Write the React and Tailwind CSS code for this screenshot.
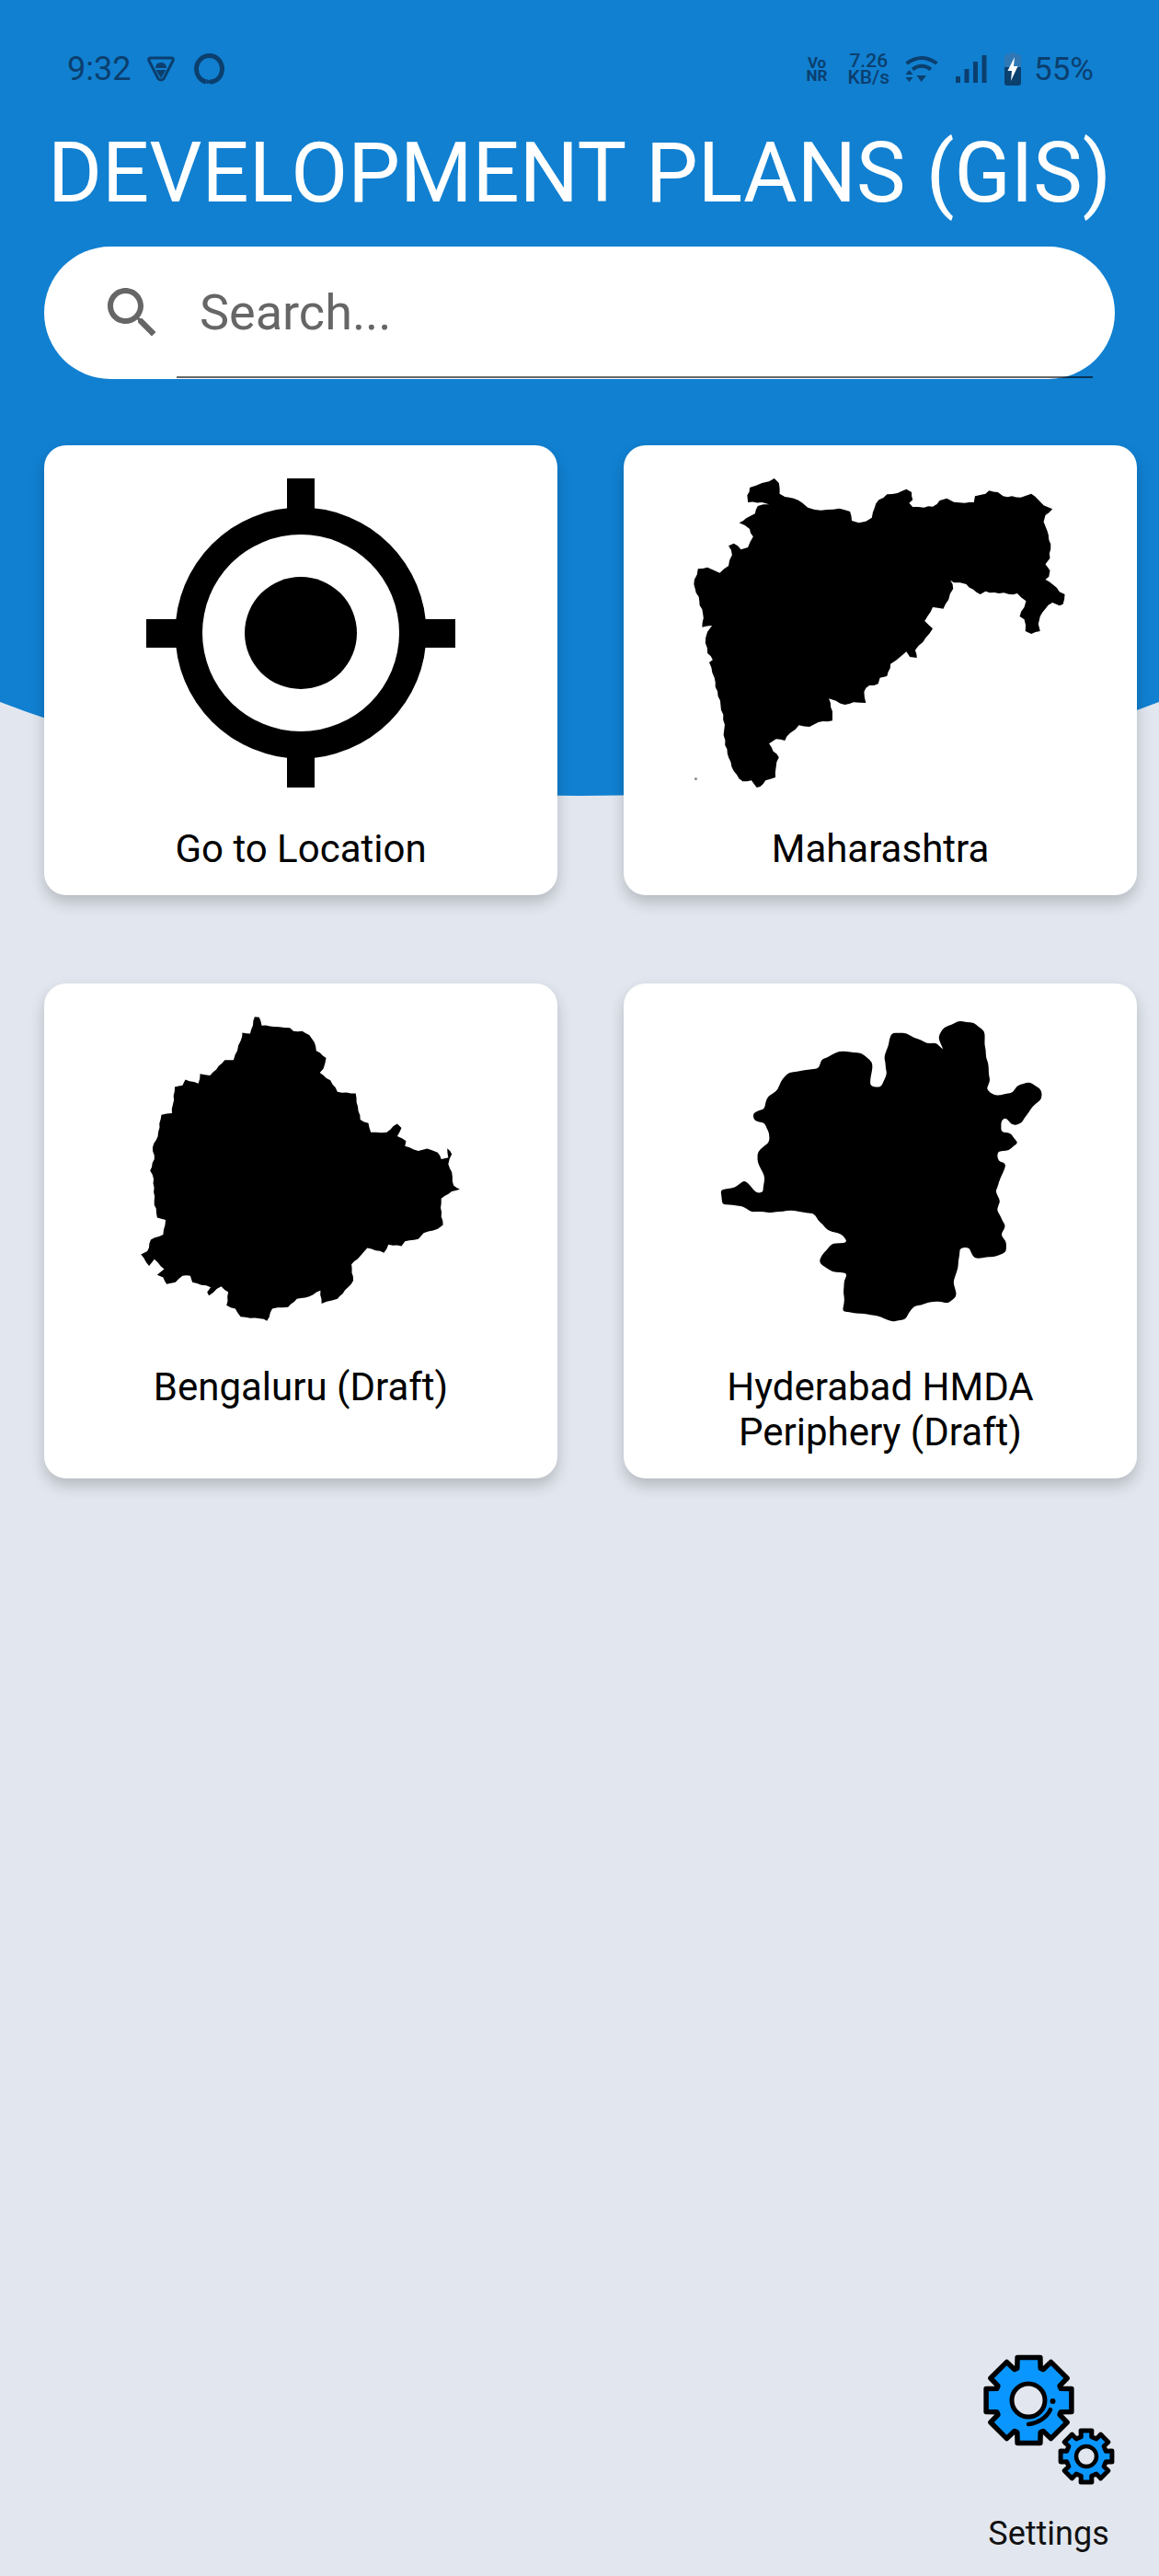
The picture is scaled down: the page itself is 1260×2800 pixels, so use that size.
const cards = [
  { label: "Go to Location", art: <TargetIcon /> },
  { label: "Maharashtra", art: <MaharashtraMap /> },
  { label: "Bengaluru (Draft)", art: <BengaluruMap /> },
  { label: "Hyderabad HMDA Periphery (Draft)", art: <HyderabadMap /> },
];

function gearPath(cx, cy, tipR, rootR, tipHalf, rootHalf) {
  let d = "";
  for (let i = 0; i < 8; i++) {
    const a = i * 45 - 90;
    const pts = [
      [a - rootHalf, rootR],
      [a - tipHalf, tipR],
      [a + tipHalf, tipR],
      [a + rootHalf, rootR],
    ];
    pts.forEach(([deg, r]) => {
      const rad = (deg * Math.PI) / 180;
      const x = (cx + r * Math.cos(rad)).toFixed(1);
      const y = (cy + r * Math.sin(rad)).toFixed(1);
      d += `${d ? "L" : "M"}${x} ${y} `;
    });
  }
  return d + "Z";
}

function toPoints(str) {
  return str.trim().split(/\s+/).map((p) => p.split(",").map(Number));
}

// breaks long edges into small steps so the outline looks like a low-res map image
function roughen(str, step, amp) {
  const pts = toPoints(str);
  const out = [];
  let n = 0;
  pts.forEach((p, i) => {
    const q = pts[(i + 1) % pts.length];
    const dx = q[0] - p[0];
    const dy = q[1] - p[1];
    const len = Math.hypot(dx, dy);
    const parts = Math.max(1, Math.round(len / step));
    for (let k = 0; k < parts; k++) {
      n++;
      const t = k / parts;
      const off = k === 0 ? 0 : ((n * 7) % 5 - 2) * (amp / 2);
      out.push(`${(p[0] + dx * t - (dy / len) * off).toFixed(1)},${(p[1] + dy * t + (dx / len) * off).toFixed(1)}`);
    }
  });
  return out.join(" ");
}

// rounds the corners of a closed outline with quadratic curves through edge midpoints
function smoothPath(str) {
  const pts = toPoints(str);
  const mid = (a, b) => [(a[0] + b[0]) / 2, (a[1] + b[1]) / 2];
  const start = mid(pts[pts.length - 1], pts[0]);
  let d = `M${start[0]} ${start[1]} `;
  pts.forEach((p, i) => {
    const m = mid(p, pts[(i + 1) % pts.length]);
    d += `Q${p[0]} ${p[1]} ${m[0]} ${m[1]} `;
  });
  return d + "Z";
}

function TargetIcon() {
  return (
    <svg viewBox="0 0 336 336" className="w-[336px] h-[336px]">
      <rect x="153" y="0" width="30" height="336" />
      <rect x="0" y="153" width="336" height="31" />
      <circle cx="168" cy="168" r="136.5" />
      <circle cx="168" cy="168" r="107" fill="#fff" />
      <circle cx="168" cy="168" r="61" />
    </svg>
  );
}

const maharashtra = "475,120 488,135 490,170 505,180 530,185 555,200 570,215 590,222 625,222 660,218 690,228 695,258 715,265 735,260 752,248 760,215 772,190 795,172 825,168 850,155 865,165 868,190 858,200 868,213 900,215 925,212 945,192 965,185 985,197 1015,200 1042,198 1045,178 1075,170 1085,160 1110,165 1125,178 1150,178 1175,182 1205,170 1225,190 1240,208 1265,220 1245,240 1240,262 1250,290 1255,320 1260,350 1258,380 1245,400 1258,420 1255,440 1245,450 1265,465 1285,490 1300,498 1295,530 1285,535 1265,525 1245,545 1230,570 1225,595 1230,618 1205,627 1188,618 1185,580 1172,570 1185,540 1190,520 1165,495 1140,497 1100,492 1075,488 1060,498 1040,482 1020,465 985,460 975,452 983,480 970,515 955,545 925,540 910,570 902,585 925,610 905,640 885,665 875,680 880,705 860,702 850,685 835,700 805,725 795,765 775,770 770,790 745,795 730,815 735,852 700,850 675,858 650,845 630,838 640,880 640,910 600,915 575,930 545,925 520,950 505,975 480,970 460,985 472,1010 488,1030 480,1060 478,1095 450,1105 435,1125 425,1128 410,1105 385,1108 360,1075 345,1030 335,990 330,890 315,830 305,770 290,720 300,712 285,690 280,640 285,620 298,600 270,605 272,560 262,520 250,480 248,450 258,415 285,410 320,428 345,405 355,370 345,340 360,332 380,352 400,345 415,310 405,285 375,265 395,250 420,235 428,210 460,205 440,198 400,198 398,175 405,150 440,135 460,130";

const bengaluru = "645,127 658,128 665,153 700,157 745,160 755,170 780,170 800,182 815,205 820,230 848,252 840,285 830,297 860,320 880,355 932,360 938,400 945,440 968,450 975,478 1020,478 1050,452 1062,465 1050,490 1075,505 1072,520 1110,535 1135,528 1165,540 1175,560 1195,555 1192,527 1205,545 1195,575 1205,600 1210,640 1228,652 1205,658 1175,680 1175,735 1180,760 1165,772 1125,785 1110,803 1072,810 1062,825 1025,820 1012,845 965,830 945,855 920,880 925,930 895,970 880,985 835,1000 832,960 800,978 765,985 740,1010 695,1015 680,1052 660,1045 605,1040 590,1015 565,1005 570,965 550,947 515,975 510,965 520,950 468,935 462,915 440,915 420,935 395,940 385,920 368,912 388,895 360,865 345,885 322,850 340,840 350,805 385,790 392,745 368,738 365,710 360,700 358,620 348,595 360,560 355,525 370,490 380,425 410,420 418,340 440,335 448,318 485,330 490,300 518,305 560,258 585,258 605,200 610,175 632,178";

const hyderabad = "1000,138 1042,144 1072,170 1076,250 1082,265 1088,320 1078,350 1100,366 1152,358 1164,336 1200,325 1234,350 1235,376 1207,401 1176,452 1150,458 1134,433 1120,441 1120,478 1146,480 1168,510 1141,533 1108,537 1110,566 1133,573 1113,630 1103,660 1117,685 1107,715 1133,765 1117,790 1133,809 1133,842 1096,858 1044,862 1028,828 1002,830 997,890 983,935 993,976 966,999 930,993 872,1007 847,1048 809,1055 769,1036 668,1023 673,1000 673,930 683,908 640,903 602,876 608,854 638,817 683,814 671,792 623,773 599,747 589,725 520,715 480,721 410,721 383,703 327,698 322,653 363,647 391,624 422,662 443,662 447,611 428,571 428,538 461,509 461,481 447,449 417,441 414,420 447,407 457,368 485,348 493,324 518,295 602,283 608,257 659,232 722,237 753,265 748,337 778,341 795,300 787,250 808,177 851,177 911,209 933,205 956,228 941,190 958,158";

function MaharashtraMap() {
  return (
    <svg viewBox="47 120 1458 1008" preserveAspectRatio="none" className="w-[558px] h-[336px]">
      <polygon points={roughen(maharashtra, 16, 2.5)} />
      <circle cx="252" cy="1100" r="4" fill="#888" />
    </svg>
  );
}

function BengaluruMap() {
  return (
    <svg viewBox="47 126 1458 941" preserveAspectRatio="none" className="w-[558px] h-[336px]">
      <polygon points={roughen(bengaluru, 14, 1.6)} />
    </svg>
  );
}

function HyderabadMap() {
  return (
    <svg viewBox="47 126 1458 941" preserveAspectRatio="none" className="w-[558px] h-[336px]">
      <path d={smoothPath(roughen(hyderabad, 20, 2))} />
    </svg>
  );
}

function SettingsIcon() {
  return (
    <svg viewBox="0 0 144 144" className="w-[144px] h-[144px]">
      <path d={gearPath(50.5, 51, 48, 37, 15, 20)} fill="#0a96ff" stroke="#000" strokeWidth="5.5" strokeLinejoin="round" />
      <circle cx="50" cy="51" r="18" fill="#e2e7ef" stroke="#000" strokeWidth="5" />
      <path d="M50 77 C60 76 70 70 74 61" fill="none" stroke="#000" strokeWidth="4.5" strokeLinecap="round" />
      <circle cx="76.5" cy="52" r="3" />
      <path d={gearPath(113, 112, 28.5, 22, 12, 15)} fill="#0a96ff" stroke="#000" strokeWidth="5" strokeLinejoin="round" />
      <circle cx="113" cy="112" r="11" fill="#e2e7ef" stroke="#000" strokeWidth="4.5" />
    </svg>
  );
}

function StatusBar() {
  return (
    <div className="flex items-center justify-between h-[36px] mt-[57px] pl-[73px] pr-[71px] text-[#0b3f6e]">
      <div className="flex items-center">
        <span className="text-[36px] leading-none">9:32</span>
        <svg viewBox="0 0 30 28" className="w-[30px] h-[28px] ml-[18px]" fill="none" stroke="currentColor">
          <path d="M3.5 2 H26.5 Q29 2 28 5 L18 24.5 Q15 27.5 12 24.5 L2 5 Q1 2 3.5 2 Z" strokeWidth="3" strokeLinejoin="round" />
          <path d="M9 13 Q9 7 15 7 Q21 7 21 13 Z" fill="currentColor" stroke="none" />
          <path d="M9.5 15 H20.5 L15 24 Z" fill="currentColor" stroke="none" />
        </svg>
        <svg viewBox="0 0 33 34" className="w-[33px] h-[34px] ml-[21px]" fill="none" stroke="currentColor">
          <path d="M13 31 C6 29 2.5 23 2.5 17 C2.5 9 9 2.5 16.5 2.5 C24.5 2.5 30.5 9 30.5 17 C30.5 25 24.5 31 17 31" strokeWidth="5" />
          <path d="M13 33 L21 32 L14 28 Z" fill="currentColor" stroke="none" />
        </svg>
      </div>
      <div className="flex items-center">
        <p className="text-center text-[17px] leading-[14px] font-bold">
          Vo
          <br />
          NR
        </p>
        <p className="text-center ml-[22px] text-[21px] leading-[18px] font-medium">
          7.26
          <br />
          KB/s
        </p>
        <svg viewBox="0 0 36 30" className="w-[36px] h-[30px] ml-[17px]" fill="none" stroke="currentColor">
          <path d="M1.5 9 Q18 -3 34.5 9" strokeWidth="4" />
          <path d="M8 15.5 Q18 8 28 15.5" strokeWidth="4" />
          <path d="M12.5 22 L23 22 L17.7 29 Z" fill="currentColor" stroke="none" />
          <path d="M4.5 16 L8.5 21 H0.5 Z M0.5 24 H8.5 L4.5 29 Z" fill="currentColor" stroke="none" />
        </svg>
        <svg viewBox="0 0 34 30" className="w-[34px] h-[30px] ml-[19px]" fill="currentColor">
          <rect x="0" y="23" width="5" height="7" />
          <rect x="9.5" y="15" width="5" height="15" />
          <rect x="19" y="7" width="5" height="23" />
          <rect x="28.5" y="0" width="5" height="30" />
        </svg>
        <svg viewBox="0 0 18 36" className="w-[18px] h-[36px] ml-[19px]">
          <path d="M6 0 H12 V2 H15 Q18 2 18 5 V17 H0 V5 Q0 2 3 2 H6 Z" fill="#2f78b5" />
          <path d="M0 16 H18 V33 Q18 36 15 36 H3 Q0 36 0 33 Z" fill="currentColor" />
          <path d="M11 5 L3.5 20 H8 L7 31 L14.5 15 H10 Z" fill="#fff" />
        </svg>
        <span className="text-[35px] leading-none ml-[14px]">55%</span>
      </div>
    </div>
  );
}

function SearchBar() {
  return (
    <div className="relative flex items-center h-[144px] mt-[27px] ml-[48px] mr-[48px] rounded-full bg-white">
      <svg viewBox="0 0 24 24" className="w-[72px] h-[72px] ml-[60px]" fill="#666">
        <path d="M15.5 14h-.79l-.28-.27C15.41 12.59 16 11.11 16 9.5 16 5.91 13.09 3 9.5 3S3 5.91 3 9.5 5.91 16 9.5 16c1.61 0 3.09-.59 4.23-1.57l.27.28v.79l5 4.99L20.49 19l-4.99-5zm-6 0C7.01 14 5 11.99 5 9.5S7.01 5 9.5 5 14 7.01 14 9.5 11.99 14 9.5 14z" />
      </svg>
      <span className="ml-[37px] text-[54px] leading-none text-[#666]">Search...</span>
      {/* input underline runs a little past the pill */}
      <div className="absolute left-[144px] right-[24px] bottom-[1px] h-[2px] bg-black/60" />
    </div>
  );
}

function Card({ label, art }) {
  return (
    <div className="flex flex-col items-center bg-white rounded-[24px] pt-[36px] pb-[26px] shadow-[0_8px_16px_rgba(0,0,0,0.2)]">
      <div className="flex justify-center h-[336px] w-full">{art}</div>
      <p className="mt-[42px] px-[90px] text-center text-[42px] leading-[49px] text-black">{label}</p>
    </div>
  );
}

export default function App() {
  return (
    <div className="relative flex flex-col h-[2800px] overflow-hidden bg-[#e2e7ef] font-[Roboto,sans-serif]">
      <div className="absolute top-0 left-[-270px] w-[1800px] h-[865px] bg-[#1180d1] rounded-b-[50%_357px]" />
      <div className="relative flex flex-col flex-1">
        <StatusBar />
        <h1 className="mt-[43px] text-center text-[90px] leading-[105px] font-normal text-white whitespace-nowrap">
          DEVELOPMENT PLANS (GIS)
        </h1>
        <SearchBar />
        <div className="grid grid-cols-[558px_558px] gap-x-[72px] gap-y-[96px] mt-[72px] ml-[48px]">
          {cards.map((card) => (
            <Card key={card.label} label={card.label} art={card.art} />
          ))}
        </div>
        <div className="flex flex-col items-center self-end mt-auto mr-[48px] mb-[26px] w-[144px]">
          <SettingsIcon />
          <span className="mt-[32px] text-[36px] leading-[40px] text-[#111]">Settings</span>
        </div>
      </div>
    </div>
  );
}
